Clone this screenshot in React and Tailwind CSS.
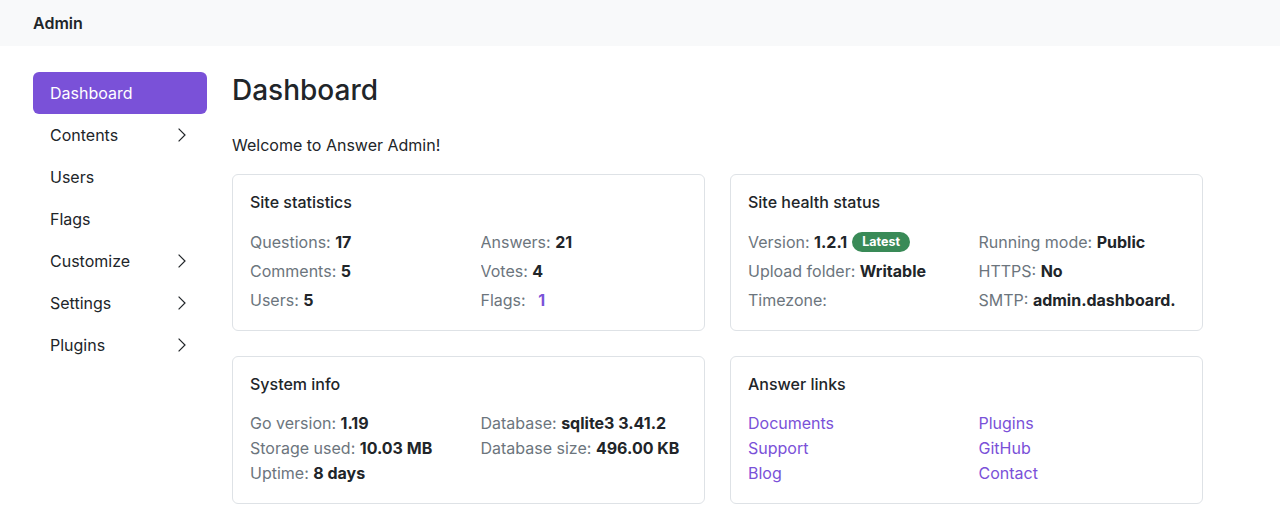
const Chevron = () => (
  <svg width="16" height="16" viewBox="0 0 16 16" fill="none" className="text-[#212529]">
    <path d="M4.6 1.6 11 8l-6.4 6.4" stroke="currentColor" strokeWidth="1.2" />
  </svg>
);

const navItems = [
  { label: "Dashboard", active: true },
  { label: "Contents", arrow: true },
  { label: "Users" },
  { label: "Flags" },
  { label: "Customize", arrow: true },
  { label: "Settings", arrow: true },
  { label: "Plugins", arrow: true },
];

const Item = ({ label, children }) => (
  <div className="truncate">
    <span className="text-[#6c757d]">{label}: </span>
    {children}
  </div>
);

const Card = ({ title, children, rowClass }) => (
  <div className="rounded-md border border-[#dee2e6] bg-white px-[17px] pt-[15px] pb-[16px]">
    <div className="text-[16px] font-medium leading-[24px] text-[#212529]">{title}</div>
    <div className={`grid grid-cols-2 gap-x-6 ${rowClass}`}>{children}</div>
  </div>
);

export default function App() {
  return (
    <div
      className="min-h-screen bg-white text-[16px] text-[#212529]"
      style={{ fontFamily: "Inter, 'Liberation Sans', sans-serif" }}
    >
      <header className="flex h-[46px] items-center bg-[#f8f9fa] px-[33px]">
        <span className="text-[16px] font-semibold">Admin</span>
      </header>

      <div className="flex gap-[25px] px-[33px] pt-[26px]">
        {/* Sidebar */}
        <nav className="flex w-[174px] shrink-0 flex-col">
          {navItems.map((n) => (
            <div
              key={n.label}
              className={`flex h-[42px] items-center justify-between rounded-md px-[17px] ${
                n.active ? "bg-[#7a51d8] text-white" : "text-[#212529]"
              }`}
            >
              <span>{n.label}</span>
              {n.arrow && <Chevron />}
            </div>
          ))}
        </nav>

        {/* Main */}
        <main className="w-[971px]">
          <h1 className="mt-[1px] text-[28px] font-medium leading-[34px]">Dashboard</h1>
          <p className="mt-[26px] leading-[24px]">Welcome to Answer Admin!</p>

          <div className="mt-[17px] grid grid-cols-2 gap-[25px]">
            <Card title="Site statistics" rowClass="mt-[13px] auto-rows-[29px] items-center">
              <Item label="Questions"><b>17</b></Item>
              <Item label="Answers"><b>21</b></Item>
              <Item label="Comments"><b>5</b></Item>
              <Item label="Votes"><b>4</b></Item>
              <Item label="Users"><b>5</b></Item>
              <Item label="Flags">
                <b className="ml-[8px] text-[#7a51d8]">1</b>
              </Item>
            </Card>

            <Card title="Site health status" rowClass="mt-[13px] auto-rows-[29px] items-center">
              <div className="flex items-center">
                <span className="text-[#6c757d]">Version:&nbsp;</span>
                <b>1.2.1</b>
                <span className="ml-[5px] rounded-full bg-[#398a57] px-[10px] py-[2px] text-[12.5px] font-bold leading-[16px] text-white">
                  Latest
                </span>
              </div>
              <Item label="Running mode"><b>Public</b></Item>
              <Item label="Upload folder"><b>Writable</b></Item>
              <Item label="HTTPS"><b>No</b></Item>
              <Item label="Timezone"></Item>
              <Item label="SMTP"><b>admin.dashboard.</b></Item>
            </Card>

            <Card title="System info" rowClass="mt-[14px] mb-[2px] auto-rows-[25px] items-center">
              <Item label="Go version"><b>1.19</b></Item>
              <Item label="Database"><b>sqlite3 3.41.2</b></Item>
              <Item label="Storage used"><b>10.03 MB</b></Item>
              <Item label="Database size"><b>496.00 KB</b></Item>
              <Item label="Uptime"><b>8 days</b></Item>
            </Card>

            <Card title="Answer links" rowClass="mt-[14px] mb-[2px] auto-rows-[25px] items-center">
              <a className="text-[#7a51d8]">Documents</a>
              <a className="text-[#7a51d8]">Plugins</a>
              <a className="text-[#7a51d8]">Support</a>
              <a className="text-[#7a51d8]">GitHub</a>
              <a className="text-[#7a51d8]">Blog</a>
              <a className="text-[#7a51d8]">Contact</a>
            </Card>
          </div>
        </main>
      </div>
    </div>
  );
}
